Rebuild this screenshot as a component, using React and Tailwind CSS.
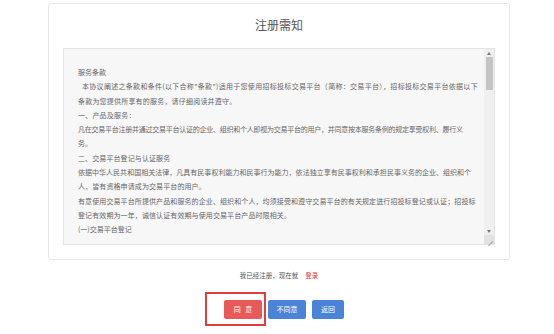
import React from 'react';

const lines = [
  { text: '服务条款' },
  { text: '本协议阐述之条款和条件(以下合称"条款")适用于您使用招标投标交易平台（简称：交易平台），招标投标交易平台依据以下', cls: 'pl-[4px] tracking-[0.3px]' },
  { text: '条款为您提供所享有的服务，请仔细阅读并遵守。', cls: 'tracking-[0.2px]' },
  { text: '一、产品及服务：', cls: 'tracking-[0.2px]' },
  { text: '凡在交易平台注册并通过交易平台认证的企业、组织和个人即视为交易平台的用户，并同意按本服务条例的规定享受权利、履行义', cls: 'tracking-[-0.25px]' },
  { text: '务。' },
  { text: '二、交易平台登记与认证服务', cls: 'tracking-[0.1px]' },
  { text: '依据中华人民共和国相关法律，凡具有民事权利能力和民事行为能力，依法独立享有民事权利和承担民事义务的企业、组织和个', cls: 'tracking-[0.02px]' },
  { text: '人，皆有资格申请成为交易平台的用户。', cls: 'tracking-[0.1px]' },
  { text: '有意使用交易平台所提供产品和服务的企业、组织和个人，均须接受和遵守交易平台的有关规定进行招投标登记或认证；招投标', cls: 'tracking-[0.1px]' },
  { text: '登记有效期为一年，诚信认证有效期与使用交易平台产品时限相关。', cls: 'tracking-[0.1px]' },
  { text: '(一)交易平台登记' },
];

const Scrollbar = () => (
  <div className="flex w-[10px] flex-col bg-[#efefef]">
    <div className="flex h-[8px] items-center justify-center">
      <div className="h-0 w-0 border-x-[2.5px] border-b-[3px] border-x-transparent border-b-[#777]" />
    </div>
    <div className="mx-[1.5px] h-[33px] bg-[#c4c4c4]" />
    <div className="flex-1" />
    <div className="flex h-[8px] items-center justify-center">
      <div className="h-0 w-0 border-x-[2.5px] border-t-[3px] border-x-transparent border-t-[#777]" />
    </div>
    <div className="relative h-[9px] bg-[#e2e2e2]">
      <div className="absolute bottom-[2px] right-[1px] h-px w-[6px] -rotate-45 bg-[#aaa] origin-bottom-right" />
      <div className="absolute bottom-[2px] right-[1px] h-px w-[3px] -rotate-45 bg-[#aaa] origin-bottom-right" />
    </div>
  </div>
);

const App = () => {
  return (
    <div
      className="h-[334px] w-[554px] bg-white"
      style={{ fontFamily: '"Noto Sans CJK SC", "Noto Sans", sans-serif' }}
    >
      <div className="ml-[48px] w-[462px] pt-[3px]">
        <div className="rounded-[3px] border border-[#e6e6e6] px-[14px] pb-[14px] pt-[13px]">
          <h1 className="text-center text-[12px] leading-[16px] font-normal text-[#555]">注册需知</h1>
          <div className="mt-[15px] flex h-[197px] border border-[#e4e4e4] bg-[#f7f7f7]">
            <div className="flex-1 overflow-hidden pl-[14px] pt-[16px] text-[7px] leading-[14.3px] text-[#666]">
              {lines.map((line, i) => (
                <div key={i} className={`whitespace-nowrap ${line.cls || ''}`}>
                  {line.text}
                </div>
              ))}
            </div>
            <Scrollbar />
          </div>
        </div>

        <div className="mt-[10px] text-center text-[6.5px] leading-[10px] text-[#555]">
          我已经注册，现在就<span className="ml-[7px] text-[#e4393c]">登录</span>
        </div>

        <div className="mt-[20px] flex justify-center gap-[6px] pl-[10px]">
          <div className="relative">
            <div className="absolute -bottom-[7px] -left-[19px] -right-[4px] -top-[8px] border-2 border-[#e23d3d]" />
            <button className="flex h-[19px] w-[38px] items-center justify-center rounded-[2px] bg-[#e85a5a] text-[7px] text-white">
              同&nbsp;&nbsp;&nbsp;意
            </button>
          </div>
          <button className="flex h-[19px] w-[38px] items-center justify-center rounded-[2px] bg-[#4a84d6] text-[7px] text-white">
            不同意
          </button>
          <button className="flex h-[19px] w-[32px] items-center justify-center rounded-[2px] bg-[#4a84d6] text-[7px] text-white">
            返回
          </button>
        </div>
      </div>
    </div>
  );
};

export default App;
